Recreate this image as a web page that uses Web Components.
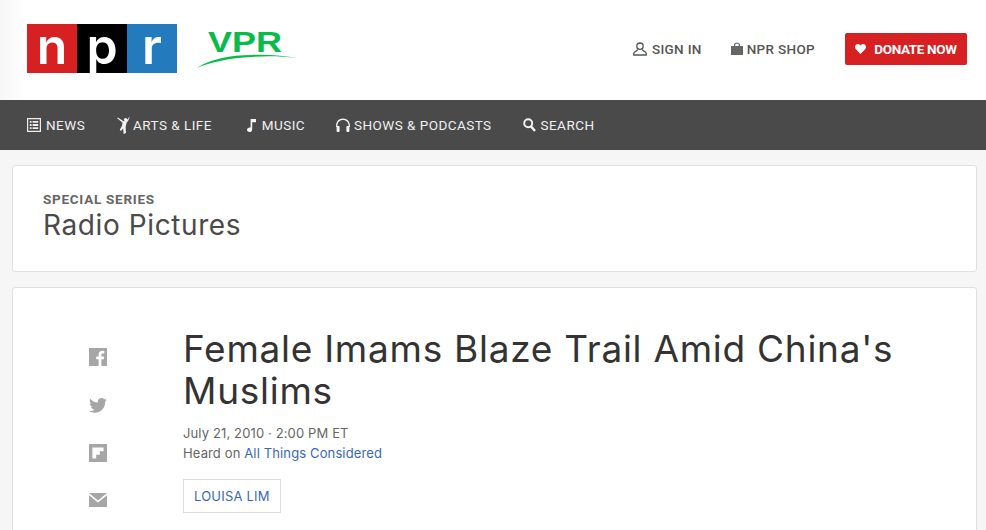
<!DOCTYPE html>
<html lang="en">
<head>
<meta charset="utf-8">
<title>Female Imams Blaze Trail Amid China's Muslims</title>
<style>
  html, body { margin: 0; padding: 0; height: 530px; overflow: hidden; background: #f6f6f6; }
  body { font-family: Inter, "Liberation Sans", sans-serif; }
</style>
</head>
<body>
<npr-header></npr-header>
<npr-nav></npr-nav>
<npr-main>
  <series-card label="SPECIAL SERIES" name="Radio Pictures"></series-card>
  <story-card></story-card>
</npr-main>

<script>
class NprHeader extends HTMLElement {
  constructor() {
    super();
    this.attachShadow({ mode: 'open' });
    this.shadowRoot.innerHTML = `
      <style>
        :host {
          display: flex;
          align-items: center;
          box-sizing: border-box;
          height: 100px;
          padding: 0 19px 3px 27px;
          background: linear-gradient(90deg, #f7f7f7 0, #fff 26px);
          font-family: Roboto, sans-serif;
        }
        .npr { display: flex; height: 49px; }
        .npr span {
          width: 50px;
          color: #fff;
          font: 600 50px/44px Inter, sans-serif;
          text-align: center;
        }
        .vpr { margin-left: 19px; position: relative; width: 102px; height: 45px; }
        .vpr b {
          position: absolute;
          left: 12px;
          top: 2px;
          color: #08bb4b;
          font: 700 29px/28px "Liberation Sans", sans-serif;
          transform: scaleX(1.24);
          transform-origin: left center;
        }
        .vpr svg { position: absolute; left: 0; top: 0; }
        .links { margin-left: auto; display: flex; align-items: center; }
        a {
          display: flex;
          align-items: center;
          gap: 5px;
          color: #555;
          font-size: 13.5px;
          font-weight: 500;
          letter-spacing: .32px;
          text-decoration: none;
        }
        .shop { margin-left: 29px; gap: 4px; }
        .donate {
          margin-left: 30px;
          height: 32px;
          width: 122px;
          box-sizing: border-box;
          justify-content: center;
          gap: 8px;
          background: #d62021;
          color: #fff;
          border-radius: 2px;
          font-weight: 700;
          letter-spacing: -.35px;
        }
      </style>
      <div class="npr">
        <span style="background:#d62021">n</span>
        <span style="background:#000">p</span>
        <span style="background:#237bbd">r</span>
      </div>
      <div class="vpr">
        <b>VPR</b>
        <svg width="102" height="45" viewBox="0 0 102 45"><path d="M1 42C14 33 34 29 56 29C72 28 88 30 101 32C84 30 70 30 56 31C34 32 14 36 1 42Z" fill="#08bb4b"/></svg>
      </div>
      <div class="links">
        <a href="#"><svg width="14" height="14" viewBox="0 0 14 14" fill="none" stroke="#555" stroke-width="1.3"><circle cx="7" cy="4.2" r="3.2"/><path d="M4.8 7.4C4.6 9 1 9.3 .8 11.2V13H13.2V11.2C13 9.3 9.4 9 9.2 7.4"/></svg>SIGN IN</a>
        <a class="shop" href="#"><svg width="12" height="13" viewBox="0 0 12 13"><path d="M0 4H3V2.8C3 .2 9 .2 9 2.8V4H12V13H0ZM4.2 4H7.8V3C7.8 1.4 4.2 1.4 4.2 3Z" fill="#666" fill-rule="evenodd"/></svg>NPR SHOP</a>
        <a class="donate" href="#"><svg width="11" height="10" viewBox="0 0 11 10"><path d="M5.5 10L.8 5.2C-1.2 2.4 1 0 2.8 0C4 0 5 .7 5.5 1.6C6 .7 7 0 8.2 0C10 0 12.2 2.4 10.2 5.2Z" fill="#fff"/></svg>DONATE NOW</a>
      </div>
    `;
  }
}

class NprNav extends HTMLElement {
  constructor() {
    super();
    this.attachShadow({ mode: 'open' });
    this.shadowRoot.innerHTML = `
      <style>
        :host {
          display: flex;
          align-items: center;
          height: 50px;
          padding-left: 27px;
          gap: 31px;
          background: #4a4a4a;
          font-family: Roboto, sans-serif;
        }
        a {
          display: flex;
          align-items: center;
          gap: 5px;
          color: #f0f0f0;
          font-size: 13.5px;
          letter-spacing: .45px;
          text-decoration: none;
        }
        .arts { gap: 3px; margin-left: 1px; }
        .music { gap: 6px; margin-left: 4px; }
        .shows { gap: 4px; }
        svg { display: block; flex: none; }
      </style>
      <a href="#"><svg width="14" height="14" viewBox="0 0 14 14"><path d="M0 0H14V14H0ZM1.2 1.2V12.8H12.8V1.2Z" fill="#eee" fill-rule="evenodd"/><path d="M2.8 3H4.6V4.8H2.8ZM5.6 3H11.2V4.8H5.6ZM2.8 6.1H4.6V7.9H2.8ZM5.6 6.1H11.2V7.9H5.6ZM2.8 9.2H4.6V11H2.8ZM5.6 9.2H11.2V11H5.6Z" fill="#eee"/></svg>NEWS</a>
      <a class="arts" href="#"><svg width="13" height="18" viewBox="0 0 13 18"><circle cx="8.6" cy="3.6" r="1.7" fill="#f4f4f4"/><path d="M12.6 0C12.4 3 11 5.4 9.6 6.8L8.6 11L9 17L6.6 18L6.2 12.6L3.8 15L2.8 13.8L5.2 9.6L5.4 6.6L.2 2.2L.8 1.6L6.6 5.2C9 5.6 11 3.4 12.6 0Z" fill="#f4f4f4"/></svg>ARTS &amp; LIFE</a>
      <a class="music" href="#"><svg width="9" height="13" viewBox="0 0 9 13"><path d="M3.6 0H9V3.2H5.2V10.4C5.2 12 4 13 2.4 13C1 13 0 12.1 0 10.8C0 9.4 1.2 8.4 2.6 8.4C2.9 8.4 3.3 8.5 3.6 8.6Z" fill="#f4f4f4"/></svg>MUSIC</a>
      <a class="shows" href="#"><svg width="14" height="14" viewBox="0 0 14 14"><path d="M0 8.5C0 3.4 2.8 .6 7 .6C11.2 .6 14 3.4 14 8.5V9H12.7V8.5C12.7 4.2 10.4 2 7 2C3.6 2 1.3 4.2 1.3 8.5V9H0Z" fill="#f4f4f4"/><rect x=".6" y="8" width="3" height="6" rx="1" fill="#f4f4f4"/><rect x="10.4" y="8" width="3" height="6" rx="1" fill="#f4f4f4"/></svg>SHOWS &amp; PODCASTS</a>
      <a href="#"><svg width="13" height="14" viewBox="0 0 13 14" fill="none" stroke="#f4f4f4"><circle cx="5.2" cy="5.2" r="4" stroke-width="1.9"/><path d="M8 8.4L12 13" stroke-width="2.4"/></svg>SEARCH</a>
    `;
  }
}

class NprMain extends HTMLElement {
  constructor() {
    super();
    this.attachShadow({ mode: 'open' });
    this.shadowRoot.innerHTML = `
      <style>
        :host {
          display: flex;
          flex-direction: column;
          gap: 15px;
          padding: 15px 9px 0 12px;
        }
      </style>
      <slot></slot>
    `;
  }
}

class SeriesCard extends HTMLElement {
  constructor() {
    super();
    this.attachShadow({ mode: 'open' });
  }

  connectedCallback() {
    this.shadowRoot.innerHTML = `
      <style>
        :host {
          display: block;
          box-sizing: border-box;
          height: 107px;
          padding: 25px 30px 0;
          background: #fff;
          border: 1px solid #e0e0e0;
          border-radius: 3px;
        }
        .label {
          color: #666;
          font: 700 13.5px/16px Roboto, sans-serif;
          letter-spacing: .73px;
        }
        .name {
          margin-top: 2px;
          color: #4a4a4a;
          font: 400 28px/32px Inter, sans-serif;
          letter-spacing: .6px;
        }
      </style>
      <div class="label">${this.getAttribute('label')}</div>
      <div class="name">${this.getAttribute('name')}</div>
    `;
  }
}

class StoryCard extends HTMLElement {
  constructor() {
    super();
    this.attachShadow({ mode: 'open' });
    this.shadowRoot.innerHTML = `
      <style>
        :host {
          display: flex;
          box-sizing: border-box;
          height: 400px;
          padding: 40px 30px 0 76px;
          background: #fff;
          border: 1px solid #e0e0e0;
          border-radius: 3px;
        }
        .share {
          display: flex;
          flex-direction: column;
          align-items: center;
          gap: 31px;
          width: 18px;
          padding-top: 20px;
        }
        .share svg { display: block; flex: none; }
        .body { margin-left: 76px; }
        h1 {
          margin: 0;
          color: #333;
          font: 400 37px/42px Inter, sans-serif;
          letter-spacing: .73px;
        }
        .meta {
          margin-top: 11px;
          color: #666;
          font-size: 13px;
          line-height: 20px;
          letter-spacing: .13px;
        }
        .meta a { color: #3b68b5; text-decoration: none; }
        .byline {
          display: inline-block;
          margin-top: 16px;
          padding: 0 10px;
          height: 32px;
          line-height: 32px;
          border: 1px solid #ddd;
          color: #3b68b5;
          font-size: 13px;
          letter-spacing: .2px;
          text-decoration: none;
        }
      </style>
      <div class="share">
        <svg width="18" height="18" viewBox="0 0 18 18"><path d="M0 0H18V18H12.4V11.2H14.8L15.2 8.4H12.4V6.8C12.4 5.9 12.7 5.4 13.8 5.4H15.3V2.9C14.9 2.8 14.2 2.8 13.4 2.8C11.2 2.8 9.6 4.1 9.6 6.5V8.4H7.2V11.2H9.6V18H0Z" fill="#a6a6a6"/></svg>
        <svg width="18" height="15" viewBox="0 0 18 15" style="margin-top:1px"><path d="M18 1.8C17.3 2.1 16.6 2.3 15.9 2.4C16.6 1.9 17.2 1.2 17.4 .4C16.7 .8 16 1.1 15.1 1.3C14.4 .5 13.5 0 12.4 0C10.4 0 8.7 1.7 8.7 3.7C8.7 4 8.8 4.3 8.8 4.5C5.8 4.4 3.1 2.9 1.3 .7C1 1.3 .8 1.9 .8 2.6C.8 3.9 1.5 5 2.4 5.7C1.8 5.7 1.2 5.5 .7 5.2V5.3C.7 7.1 2 8.6 3.7 8.9C3.1 9.1 2.5 9.1 2 9C2.5 10.4 3.8 11.5 5.5 11.5C4.2 12.5 2.6 13.1 .9 13.1C.6 13.1 .3 13.1 0 13C1.7 14.1 3.6 14.7 5.7 14.7C12.5 14.7 16.2 9.1 16.2 4.2V3.7C16.9 3.2 17.5 2.5 18 1.8Z" fill="#a6a6a6"/></svg>
        <svg width="18" height="18" viewBox="0 0 18 18"><path d="M0 0H18V18H0ZM3.4 3.4V14.6H7.2V10.8H10.8V7.2H14.6V3.4Z" fill="#a6a6a6" fill-rule="evenodd"/></svg>
        <svg width="18" height="14" viewBox="0 0 18 14"><path d="M0 0H18L9 7.4ZM0 2.2L9 9.6L18 2.2V14H0Z" fill="#a6a6a6"/></svg>
      </div>
      <div class="body">
        <h1>Female Imams Blaze Trail Amid China's Muslims</h1>
        <div class="meta">
          <div>July 21, 2010 · 2:00 PM ET</div>
          <div>Heard on <a href="#">All Things Considered</a></div>
        </div>
        <a class="byline" href="#">LOUISA LIM</a>
      </div>
    `;
  }
}

customElements.define('npr-header', NprHeader);
customElements.define('npr-nav', NprNav);
customElements.define('npr-main', NprMain);
customElements.define('series-card', SeriesCard);
customElements.define('story-card', StoryCard);
</script>
</body>
</html>
